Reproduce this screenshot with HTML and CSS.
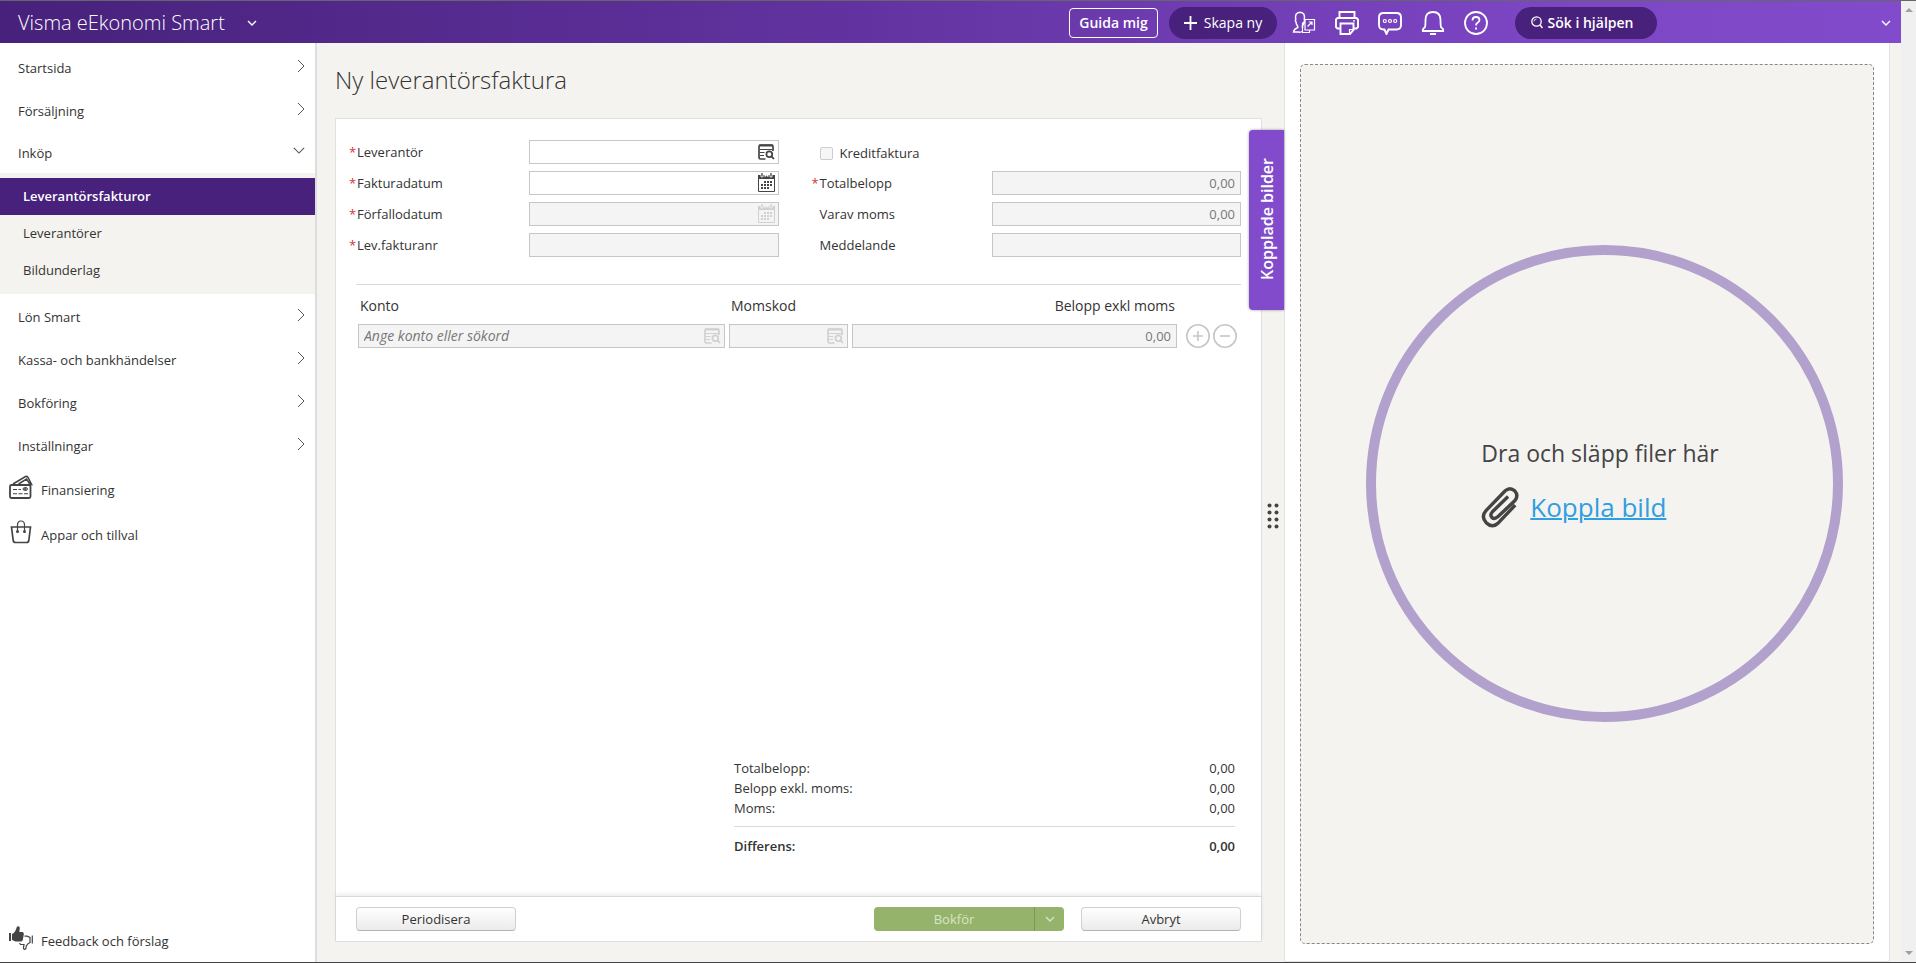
FILE: index.html
```html
<!DOCTYPE html>
<html lang="sv">
<head>
<meta charset="utf-8">
<meta name="viewport" content="width=device-width, initial-scale=1">
<title>Visma eEkonomi Smart – Ny leverantörsfaktura</title>
<link rel="stylesheet" href="styles.css">
</head>
<body>
<svg class="sprite" aria-hidden="true">
  <symbol id="chev-right" viewBox="0 0 8 14"><path d="M1 1l6 6-6 6" fill="none" stroke="currentColor"/></symbol>
  <symbol id="chev-down" viewBox="0 0 14 8"><path d="M1 1l6 6 6-6" fill="none" stroke="currentColor" stroke-width="1.3"/></symbol>
  <symbol id="chev-bold" viewBox="0 0 10 6"><path d="M1 1l4 4 4-4" fill="none" stroke="currentColor" stroke-width="1.4"/></symbol>
  <symbol id="lookup" viewBox="0 0 17 16">
    <path d="M15 7V2.500Q15 1 13.500 1H2.500Q1 1 1 2.500V13.500Q1 15 2.500 15H7.500" fill="none" stroke="currentColor" stroke-width="1.700"/>
    <path d="M1 .500H15V2.500H1z" fill="currentColor"/>
    <path d="M2 5.500H14.500M2 8.500H6.500M2 11.500H6" stroke="currentColor"/>
    <circle cx="11.300" cy="10.200" r="2.900" fill="none" stroke="currentColor" stroke-width="1.700"/>
    <path d="M13.400 12.300L16 15" stroke="currentColor" stroke-width="1.800"/>
  </symbol>
  <symbol id="calendar" viewBox="0 0 17 19">
    <path d="M.5 2.500V18.500H16.500V2.500" fill="none" stroke="currentColor"/>
    <path d="M0 2H2.500V3.500Q4 5.500 5.500 3.500V2H6.500V3.500Q8 4.500 8.500 2Q9 4.500 10.500 3.500V2H11.500V3.500Q13 5.500 14.500 3.500V2H17V6H0z" fill="currentColor"/>
    <path d="M4 0V3.500M13 0V3.500" stroke="currentColor" stroke-width="1.300"/>
    <path d="M6 9H14M3 12H14M3 15H11" stroke="currentColor" stroke-width="2" stroke-dasharray="2 1"/>
  </symbol>
</svg>

<div class="window">
  <div class="app">
    <header class="topbar">
      <button class="brand" type="button">Visma eEkonomi Smart
        <svg class="brand-chev"><use href="#chev-bold"/></svg>
      </button>
      <div class="tools">
        <button class="guide" type="button">Guida mig</button>
        <button class="pill create" type="button">
          <svg width="13" height="14" viewBox="0 0 13 14"><path d="M6.500 0V14M0 7H13" stroke="currentColor" stroke-width="1.800"/></svg>Skapa ny
        </button>
        <div class="tool-icons">
          <button class="icon-btn" type="button" aria-label="Byt företag">
            <svg viewBox="0 0 24 24" width="24" height="24" fill="none" stroke="currentColor" stroke-width="1.500">
              <path d="M10 20.500Q8.500 21.500 6.500 21H1.500Q2 18 5 17Q6.500 16.500 5.500 15Q4 13 4 11Q2.800 10 3.700 8.500Q2.500 1.500 8 1.200Q13.500 1.500 12.300 8.500Q13 10 12 11Q11.500 13.500 10.500 14.500V17"/>
              <path d="M13 8.500H22.500V19H13zM13 12H10.500V21.500H17.500V19" stroke-width="1.200"/>
              <path d="M15.500 15.500L20 11M16.800 11H20V14" stroke-width="1.200"/>
            </svg>
          </button>
          <button class="icon-btn" type="button" aria-label="Skriv ut">
            <svg viewBox="0 0 24 24" width="24" height="24" fill="none" stroke="currentColor" stroke-width="1.900">
              <path d="M4.500 6.500V1H19.500V6.500M4.500 17.500H2.500L1 16V8.500L2.500 7H21.500L23 8.500V16L21.500 17.500H19.500M5.500 12.500H18.500V19L15 23H5.500z"/>
              <path d="M18.500 18.500H14.500V23M18 9.800H20" stroke-width="1.200"/>
            </svg>
          </button>
          <button class="icon-btn" type="button" aria-label="Meddelanden">
            <svg viewBox="0 0 24 24" width="24" height="24" fill="none" stroke="currentColor" stroke-width="1.900">
              <path d="M5.500 2Q1 2 1 6.500V14Q1 18.500 5.500 18.500H6.500L8.500 23L10.500 18.500H18.500Q23 18.500 23 14V6.500Q23 2 18.500 2z"/>
              <g stroke-width="1.200"><circle cx="6.800" cy="10" r="1.500"/><circle cx="12" cy="10" r="1.500"/><circle cx="17.200" cy="10" r="1.500"/></g>
            </svg>
          </button>
          <button class="icon-btn" type="button" aria-label="Aviseringar">
            <svg viewBox="0 0 24 24" width="24" height="24" fill="none" stroke="currentColor" stroke-width="1.800">
              <path d="M1.800 20Q1.500 17.500 3.800 16.500Q4.500 15.500 4.500 9Q4.500 1 12 1Q19.500 1 19.500 9Q19.500 15.500 20.200 16.500Q22.500 17.500 22.200 20z"/>
              <path d="M9 23H15" stroke-width="2"/>
            </svg>
          </button>
          <button class="icon-btn" type="button" aria-label="Hjälp">
            <svg viewBox="0 0 24 24" width="24" height="24" fill="none" stroke="currentColor" stroke-width="1.800">
              <circle cx="12" cy="12" r="11"/>
              <path d="M8.500 9.500Q8.500 6 12 6Q15.500 6 15.500 9Q15.500 10.500 13.800 11.500Q12 12.500 12 14.500M12 16.500V18.500"/>
            </svg>
          </button>
        </div>
        <button class="pill search" type="button">
          <svg width="12" height="13" viewBox="0 0 12 13" fill="none" stroke="currentColor"><circle cx="5.500" cy="5.500" r="4.700" stroke-width="1.300"/><path d="M9 9l2.500 3" stroke-width="1.500"/><path d="M3 5.500Q3 3 5.500 3" stroke-width=".8"/></svg>Sök i hjälpen
        </button>
      </div>
      <button class="account" type="button" aria-label="Konto"><svg><use href="#chev-bold"/></svg></button>
    </header>

    <div class="body">
      <nav class="sidebar">
        <a class="nav-row" href="#">Startsida<svg class="chev"><use href="#chev-right"/></svg></a>
        <a class="nav-row" href="#">Försäljning<svg class="chev"><use href="#chev-right"/></svg></a>
        <a class="nav-row open" href="#">Inköp<svg class="chev-open"><use href="#chev-down"/></svg></a>
        <div class="subnav">
          <a class="sub-row active" href="#">Leverantörsfakturor</a>
          <a class="sub-row" href="#">Leverantörer</a>
          <a class="sub-row" href="#">Bildunderlag</a>
        </div>
        <a class="nav-row" href="#">Lön Smart<svg class="chev"><use href="#chev-right"/></svg></a>
        <a class="nav-row" href="#">Kassa- och bankhändelser<svg class="chev"><use href="#chev-right"/></svg></a>
        <a class="nav-row" href="#">Bokföring<svg class="chev"><use href="#chev-right"/></svg></a>
        <a class="nav-row" href="#">Inställningar<svg class="chev"><use href="#chev-right"/></svg></a>
        <a class="util-row" href="#">
          <svg class="util-icon" viewBox="0 0 24 24" fill="none" stroke="currentColor">
            <rect x="1" y="10" width="20.500" height="13" rx="1.500" stroke-width="1.800"/>
            <path d="M4 9L16.500 1.500Q18 1 19 2.500L23.200 10.500M9.500 9L17.500 4L21.500 10" stroke-width="1.500"/>
            <path d="M4 14.500H12M4 18.700H19" stroke-dasharray="4 1.500" stroke-width="1.100"/>
            <circle cx="15.500" cy="14" r="1.400" stroke-width="1"/><circle cx="17" cy="14" r="1.400" stroke-width="1"/>
          </svg>Finansiering</a>
        <a class="util-row" href="#">
          <svg class="util-icon" viewBox="0 0 24 24" fill="none" stroke="currentColor">
            <path d="M2.500 7H21.500L19.800 20.500Q19.500 22.500 17.500 22.500H6.500Q4.500 22.500 4.200 20.500z" stroke-width="1.700"/>
            <path d="M8.500 11V5Q8.500 1 12 1Q15.500 1 15.500 5V11" stroke-width="1.200"/>
            <g fill="currentColor" stroke="none"><circle cx="8.500" cy="11.500" r="1.500"/><circle cx="15.500" cy="11.500" r="1.500"/></g>
          </svg>Appar och tillval</a>
        <a class="util-row feedback" href="#">
          <svg class="util-icon" viewBox="0 0 24 24">
            <path d="M0 7H2V15H0zM3 8Q6 7 7.500 2Q7.600 .3 9 .3Q11.200 .5 10.700 3L10.300 6H13.500Q15.300 6.500 14.800 8.500L13.800 14Q13.300 15.500 11.500 15.500H6.500L3 14z" fill="currentColor"/>
            <path d="M23.300 9.500V17.500M15.500 10.200H18L21 11.500V16.500Q18.500 17.500 17.300 20Q17.200 23.500 15.500 23.500Q14 23 14.700 20.500L15 18.500H11.500L10.500 17" fill="none" stroke="currentColor" stroke-width="1.200"/>
          </svg>Feedback och förslag</a>
      </nav>

      <main class="main">
        <h1 class="page-title">Ny leverantörsfaktura</h1>
        <form class="card">
          <div class="card-body">
            <div class="fields">
              <div class="field-col">
                <div class="field"><label for="lev"><span class="req">*</span>Leverantör</label>
                  <div class="control"><input id="lev" type="text"><svg class="in-icon lookup"><use href="#lookup"/></svg></div></div>
                <div class="field"><label for="fdat"><span class="req">*</span>Fakturadatum</label>
                  <div class="control"><input id="fdat" type="text"><svg class="in-icon cal"><use href="#calendar"/></svg></div></div>
                <div class="field"><label for="ffdat"><span class="req">*</span>Förfallodatum</label>
                  <div class="control"><input id="ffdat" type="text" disabled><svg class="in-icon cal off"><use href="#calendar"/></svg></div></div>
                <div class="field"><label for="fnr"><span class="req">*</span>Lev.fakturanr</label>
                  <div class="control"><input id="fnr" type="text" disabled></div></div>
              </div>
              <div class="field-col">
                <div class="field check"><input id="kredit" type="checkbox" disabled><label for="kredit">Kreditfaktura</label></div>
                <div class="field"><label for="tot"><span class="req">*</span>Totalbelopp</label>
                  <div class="control"><input id="tot" class="num" type="text" value="0,00" disabled></div></div>
                <div class="field"><label for="moms"><span class="req"></span>Varav moms</label>
                  <div class="control"><input id="moms" class="num" type="text" value="0,00" disabled></div></div>
                <div class="field"><label for="medd"><span class="req"></span>Meddelande</label>
                  <div class="control"><input id="medd" type="text" disabled></div></div>
              </div>
            </div>
            <hr class="rule">
            <table class="lines">
              <colgroup><col><col class="c-code"><col class="c-amount"><col class="c-act"></colgroup>
              <thead><tr><th>Konto</th><th>Momskod</th><th class="right">Belopp exkl moms</th><td></td></tr></thead>
              <tbody><tr>
                <td><div class="control"><input type="text" aria-label="Konto" placeholder="Ange konto eller sökord" disabled><svg class="in-icon lookup off"><use href="#lookup"/></svg></div></td>
                <td><div class="control"><input type="text" aria-label="Momskod" disabled><svg class="in-icon lookup off"><use href="#lookup"/></svg></div></td>
                <td><div class="control"><input class="num" type="text" aria-label="Belopp exkl moms" value="0,00" disabled></div></td>
                <td><div class="row-actions">
                  <button type="button" aria-label="Lägg till rad"><svg viewBox="0 0 24 24"><circle cx="12" cy="12" r="11.200"/><path d="M12 7V17M7 12H17"/></svg></button>
                  <button type="button" aria-label="Ta bort rad"><svg viewBox="0 0 24 24"><circle cx="12" cy="12" r="11.200"/><path d="M7 12H17"/></svg></button>
                </div></td>
              </tr></tbody>
            </table>
            <dl class="totals">
              <div><dt>Totalbelopp:</dt><dd>0,00</dd></div>
              <div><dt>Belopp exkl. moms:</dt><dd>0,00</dd></div>
              <div><dt>Moms:</dt><dd>0,00</dd></div>
              <div class="diff"><dt>Differens:</dt><dd>0,00</dd></div>
            </dl>
          </div>
          <footer class="card-foot">
            <button class="btn" type="button">Periodisera</button>
            <div class="foot-right">
              <div class="split"><button class="book" type="button">Bokför</button><button class="book-more" type="button" aria-label="Fler val"><svg><use href="#chev-bold"/></svg></button></div>
              <button class="btn" type="button">Avbryt</button>
            </div>
          </footer>
        </form>
        <button class="side-tab" type="button"><span>Kopplade bilder</span></button>
        <svg class="grip" viewBox="0 0 12 26" fill="currentColor">
          <circle cx="2.500" cy="2.500" r="2"/><circle cx="9.500" cy="2.500" r="2"/><circle cx="2.500" cy="9.500" r="2"/><circle cx="9.500" cy="9.500" r="2"/>
          <circle cx="2.500" cy="16.500" r="2"/><circle cx="9.500" cy="16.500" r="2"/><circle cx="2.500" cy="23.500" r="2"/><circle cx="9.500" cy="23.500" r="2"/>
        </svg>
      </main>

      <aside class="panel">
        <div class="dropzone">
          <div class="ring">
            <div class="drop-content">
              <p>Dra och släpp filer här</p>
              <div class="attach">
                <svg width="38" height="42" viewBox="0 0 40 44" fill="none" stroke="currentColor" stroke-width="3.600">
                  <path d="M36 20L18.500 38.500Q12 45 5.500 38.500Q-.5 32 5.500 25.500L25.500 5Q30.500 .5 35.500 5Q40 10 35.500 15.500L18 32Q14 35.500 11.500 33Q9 30.500 12 27L28.500 11"/>
                </svg>
                <a href="#">Koppla bild</a>
              </div>
            </div>
          </div>
        </div>
      </aside>
    </div>
  </div>
  <div class="scrollbar" aria-hidden="true"><i class="arrow up"></i><i class="arrow down"></i></div>
</div>
</body>
</html>
```
FILE: styles.css
```css
* { box-sizing: border-box; }
body {
  margin: 0;
  font: 13px/18px "Open Sans", "Noto Sans", sans-serif;
  color: #333;
  background: #f5f3f0;
}
button, input { font: inherit; color: inherit; }
button { cursor: pointer; padding: 0; border: 0; background: none; }
a { color: inherit; text-decoration: none; }
.sprite { position: absolute; width: 0; height: 0; }

.window {
  display: flex;
  min-height: 100vh;
  border-top: 1px solid #65666a;
  border-bottom: 1px solid #444;
}
.app { flex: 1; display: flex; flex-direction: column; min-width: 0; }

/* Top bar */
.topbar {
  display: flex;
  align-items: center;
  height: 42px;
  padding: 1px 10px 0 18px;
  color: #fff;
  background: linear-gradient(90deg, #47217b, #6233a0 45%, #7c45c3 80%, #824bcb);
}
.brand { display: flex; align-items: center; gap: 22px; font-size: 20px; font-weight: 300; }
.brand-chev { width: 10px; height: 6px; }
.tools { display: flex; align-items: center; margin-left: auto; }
.guide {
  width: 89px;
  height: 30px;
  border: 1px solid #fff;
  border-radius: 4px;
  font-size: 14px;
  font-weight: 600;
}
.pill {
  display: flex;
  align-items: center;
  justify-content: center;
  height: 32px;
  border-radius: 16px;
  background: #47217b;
  font-size: 14px;
}
.create { width: 108px; gap: 7px; margin-left: 11px; font-weight: 500; }
.search { width: 142px; gap: 5px; margin-left: 27px; padding-right: 8px; font-weight: 600; }
.tool-icons { display: flex; gap: 19px; margin-left: 15px; }
.icon-btn { width: 24px; height: 24px; }
.icon-btn svg { display: block; }
.account { display: flex; justify-content: flex-end; width: 234px; }
.account svg { width: 10px; height: 6px; }

.body { flex: 1; display: flex; }

/* Sidebar */
.sidebar {
  flex: 0 0 317px;
  display: flex;
  flex-direction: column;
  padding-top: 3px;
  border-right: 2px solid #dddddf;
  background: #fff;
}
.nav-row {
  display: flex;
  align-items: center;
  justify-content: space-between;
  height: 43px;
  padding: 0 10px 0 18px;
}
.nav-row.open { height: 41px; }
.chev { width: 8px; height: 14px; margin-bottom: 4px; color: #555; }
.chev-open { width: 12px; height: 7px; margin-bottom: 4px; color: #555; }
.subnav { padding: 5px 0; margin-bottom: 1px; background: #f5f3f0; }
.sub-row { display: flex; align-items: center; height: 37px; padding: 0 0 2px 23px; }
.sub-row.active { background: #47217b; color: #fff; font-weight: 600; }
.util-row { display: flex; align-items: center; height: 45px; padding-left: 9px; gap: 8px; }
.util-icon { width: 24px; height: 24px; margin-bottom: 6px; color: #444; }
.feedback { height: 43px; margin-top: auto; }

/* Main column */
.main {
  position: relative;
  flex: 927 1 0;
  display: flex;
  flex-direction: column;
  padding: 22px 22px 20px 18px;
  background: #f5f3f0;
}
.page-title { margin: 0; font-size: 24px; line-height: 30px; font-weight: 300; }
.card {
  flex: 1;
  display: flex;
  flex-direction: column;
  margin-top: 23px;
  border: 1px solid #e0e0e0;
  background: #fff;
}
.card-body { flex: 1; display: flex; flex-direction: column; padding: 21px 20px 40px 13px; }
.fields { display: grid; grid-template-columns: 1fr 1fr; gap: 33px; }
.field-col { display: flex; flex-direction: column; gap: 7px; }
.field { display: flex; align-items: center; height: 24px; }
.field > label { flex: 1; display: flex; }
.req { width: 8px; color: #d3353b; }
.control { position: relative; display: flex; }
.field .control { flex: 0 0 58%; }
.control input {
  width: 100%;
  height: 24px;
  padding: 0 5px;
  border: 1px solid #c6c6c6;
  border-radius: 0;
  background: #fff;
}
.control input:disabled { background: #f4f4f4; color: #777; }
.control .num { text-align: right; }
.control input::placeholder { color: #777; font-size: 14px; font-style: italic; }
.in-icon { position: absolute; right: 4px; top: 4px; width: 17px; height: 16px; color: #444; }
.in-icon.cal { top: 2px; height: 19px; }
.in-icon.off { color: #d0d0d0; }
.field.check { padding: 2px 0 0 8px; }
.check input {
  appearance: none;
  width: 13px;
  height: 13px;
  margin: 0 7px 0 0;
  border: 1px solid #ccc;
  border-radius: 2px;
  background: #f6f6f6;
}
.rule { width: calc(100% - 7px); margin: 27px 0 0 7px; border: 0; border-top: 1px solid #d9d9d9; }

.lines {
  width: calc(100% - 5px);
  margin: 10px 0 0 5px;
  table-layout: fixed;
  border-spacing: 4px 0;
}
.c-code { width: 119px; }
.c-amount { width: 325px; }
.c-act { width: 56px; }
.lines th { padding: 0 2px 7px; font-size: 14px; line-height: 22px; font-weight: 400; text-align: left; }
.lines th.right { text-align: right; }
.lines td { padding: 0; }
.row-actions { display: flex; gap: 3px; padding-left: 5px; }
.row-actions button { flex: none; width: 24px; height: 24px; }
.row-actions svg { display: block; fill: none; stroke: #c6c6c6; stroke-width: 1.600; }

.totals { width: 501px; margin: auto 6px 0 auto; }
.totals div { display: flex; justify-content: space-between; height: 20px; }
.totals dd { margin: 0; }
.totals .diff {
  height: 30px;
  margin-top: 7px;
  padding-top: 10px;
  border-top: 1px solid #d9d9d9;
  font-weight: 600;
}

.card-foot {
  display: flex;
  align-items: center;
  justify-content: space-between;
  height: 45px;
  padding: 0 20px;
  border-top: 1px solid #d9d9d9;
  box-shadow: 0 -2px 4px rgba(0, 0, 0, .08);
}
.foot-right { display: flex; gap: 17px; }
.btn {
  width: 160px;
  height: 24px;
  border: 1px solid #d0d0d0;
  border-bottom-color: #b4b4b4;
  border-radius: 4px;
  background: linear-gradient(#fff, #ebebeb);
}
.split { display: flex; height: 24px; border-radius: 4px; background: #95b36b; color: #d8e5c6; }
.book { width: 160px; }
.book-more { display: flex; align-items: center; justify-content: center; width: 30px; border-left: 1px solid #7a9a50; }
.book-more svg { width: 10px; height: 6px; }

/* Overlays on the divider between form and attachments */
.side-tab {
  position: absolute;
  top: 87px;
  right: 0;
  width: 35px;
  height: 180px;
  border-radius: 4px 0 0 4px;
  background: #824bcb;
  color: #fff;
  box-shadow: 0 0 3px rgba(0, 0, 0, .4);
  font-size: 16px;
  font-weight: 600;
}
.side-tab span { writing-mode: vertical-rl; transform: rotate(180deg); }
.grip { position: absolute; right: 5px; top: 50%; width: 12px; height: 26px; color: #444; }

/* Attachment panel */
.panel {
  flex: 574 1 0;
  display: flex;
  margin-right: 11px;
  padding: 21px 15px 17px;
  border: 1px solid #e3e3e3;
  border-top: 0;
  background: #fff;
}
.dropzone {
  flex: 1;
  display: flex;
  align-items: center;
  justify-content: center;
  padding: 0 0 42px 34px;
  border: 1px dashed #888;
  border-radius: 5px;
  background: #f5f3f0;
}
.ring {
  display: flex;
  align-items: center;
  justify-content: center;
  width: 477px;
  max-width: 100%;
  aspect-ratio: 1;
  border: 10px solid #b2a1cc;
  border-radius: 50%;
}
.drop-content { padding-right: 8px; color: #444; font-size: 23px; line-height: 30px; }
.drop-content p { margin: 0; }
.attach { display: flex; align-items: center; gap: 11px; margin-top: 18px; }
.attach a { color: #2f9fe0; font-size: 26px; line-height: 36px; text-decoration: underline; text-decoration-thickness: 2px; }

.scrollbar {
  flex: 0 0 15px;
  display: flex;
  flex-direction: column;
  align-items: center;
  justify-content: space-between;
  padding: 7px 0;
  background: #f0f0f0;
}
.arrow { border: 4px solid transparent; }
.arrow.up { border-top: 0; border-bottom-color: #a0a0a0; }
.arrow.down { border-bottom: 0; border-top-color: #a0a0a0; }
```
